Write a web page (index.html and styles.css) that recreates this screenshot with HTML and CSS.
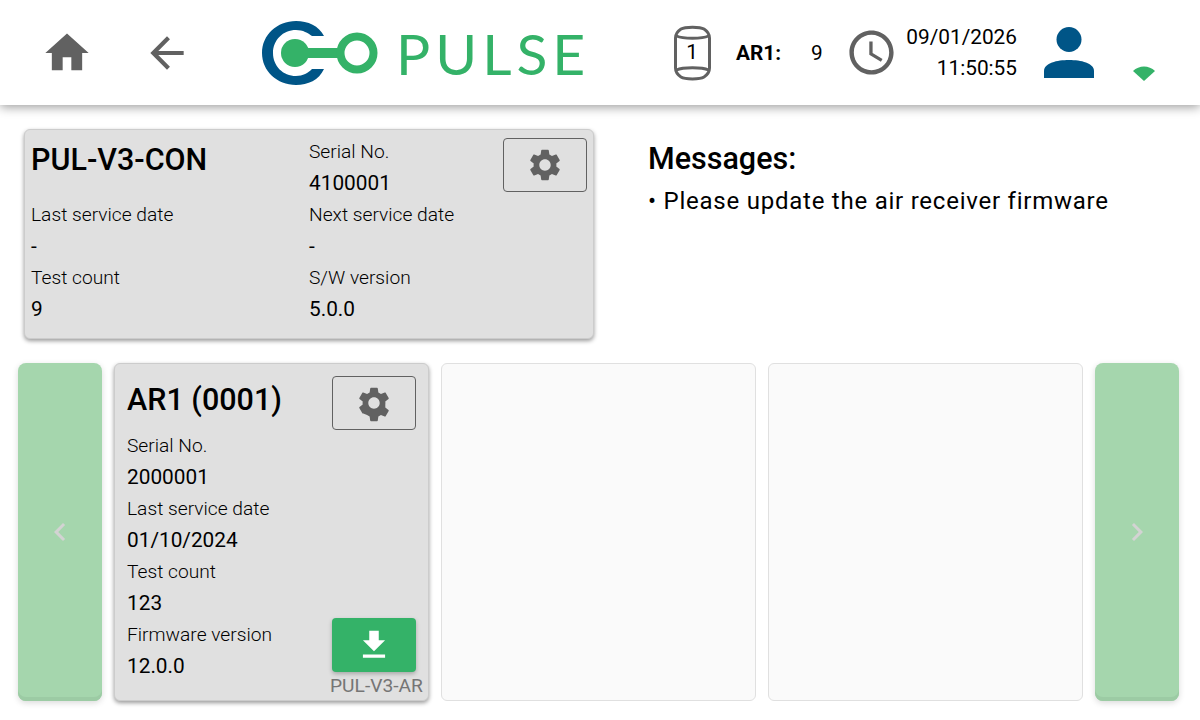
FILE: index.html
```html
<!DOCTYPE html>
<html lang="en">
<head>
    <meta charset="UTF-8">
    <title>Pulse</title>
    <link rel="stylesheet" href="styles.css">
</head>
<body>
    <header class="topbar">
        <svg class="icon-home" viewBox="0 0 24 24"><path d="M10 20v-6h4v6h5v-8h3L12 3 2 12h3v8z"/></svg>
        <svg class="icon-back" viewBox="0 0 24 24"><path d="M20 11H7.83l5.59-5.59L12 4l-8 8 8 8 1.41-1.41L7.83 13H20v-2z"/></svg>
        <svg class="logo-mark" viewBox="0 0 118 66">
            <path class="logo-c" d="M63 16C58 6 47 1 35 1 16 1 1 15 1 33s15 32 34 32c12 0 23-5 28-16H51c-4 4-9 7-16 7-13 0-23-10-23-23s10-23 23-23c7 0 12 3 16 6z"/>
            <circle class="logo-g" cx="34" cy="33" r="14"/>
            <rect class="logo-g" x="40" y="28" width="40" height="10"/>
            <circle class="logo-ring" cx="96" cy="33" r="16.5"/>
        </svg>
        <div class="logo-text">PULSE</div>
        <div class="can">
            <svg viewBox="0 0 38 56"><path d="M8 4C12 1.500 27 1.500 31 4c3 2 5.500 4 5.500 9v30c0 5-2.500 7-5.500 9-4 2.500-19 2.500-23 0-3-2-5.500-4-5.500-9V13C2.500 8 5 6 8 4zM3.500 11c6.500 3 25.500 3 32 0M3.500 45c6.500-3 25.500-3 32 0"/></svg>
            <span>1</span>
        </div>
        <div class="ar-name">AR1:</div>
        <div class="ar-count">9</div>
        <svg class="icon-clock" viewBox="0 0 24 24"><path d="M11.99 2C6.47 2 2 6.48 2 12s4.47 10 9.99 10C17.52 22 22 17.52 22 12S17.52 2 11.99 2zM12 20c-4.42 0-8-3.58-8-8s3.58-8 8-8 8 3.58 8 8-3.58 8-8 8zm.5-13H11v6l5.25 3.15.75-1.23-4.5-2.67z"/></svg>
        <div class="datetime">
            <div>09/01/2026</div>
            <div>11:50:55</div>
        </div>
        <svg class="icon-user" viewBox="0 0 52 52"><circle cx="26" cy="12.500" r="12.500"/><path d="M1 51V44C1 36 14 33 26 33s25 3 25 11v7z"/></svg>
        <svg class="icon-wifi" viewBox="0 0 24 16"><path d="M1 6c6-6 16-6 22 0L12 16z"/></svg>
    </header>

    <section class="upper">
        <div class="card con-card">
            <div class="con-title">PUL-V3-CON</div>
            <div class="con-col">
                <div class="label">Serial No.</div>
                <div class="value">4100001</div>
            </div>
            <div class="con-col">
                <div class="label">Last service date</div>
                <div class="value">-</div>
            </div>
            <div class="con-col">
                <div class="label">Next service date</div>
                <div class="value">-</div>
            </div>
            <div class="con-col">
                <div class="label">Test count</div>
                <div class="value">9</div>
            </div>
            <div class="con-col">
                <div class="label">S/W version</div>
                <div class="value">5.0.0</div>
            </div>
            <button class="gear-btn con-gear">
                <svg viewBox="0 0 24 24"><path d="M19.14 12.94c.04-.3.06-.61.06-.94 0-.32-.02-.64-.07-.94l2.03-1.58c.18-.14.23-.41.12-.61l-1.92-3.32c-.12-.22-.37-.29-.59-.22l-2.39.96c-.5-.38-1.03-.7-1.62-.94l-.36-2.54c-.04-.24-.24-.41-.48-.41h-3.84c-.24 0-.43.17-.47.41l-.36 2.54c-.59.24-1.13.57-1.62.94l-2.39-.96c-.22-.08-.47 0-.59.22L2.74 8.87c-.12.21-.08.47.12.61l2.03 1.58c-.05.3-.09.63-.09.94s.02.64.07.94l-2.03 1.58c-.18.14-.23.41-.12.61l1.92 3.32c.12.22.37.29.59.22l2.39-.96c.5.38 1.03.7 1.62.94l.36 2.54c.05.24.24.41.48.41h3.84c.24 0 .44-.17.47-.41l.36-2.54c.59-.24 1.13-.56 1.62-.94l2.39.96c.22.08.47 0 .59-.22l1.92-3.32c.12-.22.07-.47-.12-.61l-2.01-1.58zM12 15.6c-1.98 0-3.6-1.62-3.6-3.6s1.62-3.6 3.6-3.6 3.6 1.62 3.6 3.6-1.62 3.6-3.6 3.6z"/></svg>
            </button>
        </div>
        <div class="messages">
            <div class="messages-title">Messages:</div>
            <div class="messages-line">• Please update the air receiver firmware</div>
        </div>
    </section>

    <section class="receivers">
        <button class="nav-btn">
            <svg viewBox="0 0 24 24"><path d="M15.41 7.41 14 6l-6 6 6 6 1.41-1.41L10.830 12z"/></svg>
        </button>
        <div class="card ar-card">
            <div class="ar-head">
                <div class="ar-title">AR1 (0001)</div>
                <button class="gear-btn">
                    <svg viewBox="0 0 24 24"><path d="M19.14 12.94c.04-.3.06-.61.06-.94 0-.32-.02-.64-.07-.94l2.03-1.58c.18-.14.23-.41.12-.61l-1.92-3.32c-.12-.22-.37-.29-.59-.22l-2.39.96c-.5-.38-1.03-.7-1.62-.94l-.36-2.54c-.04-.24-.24-.41-.48-.41h-3.84c-.24 0-.43.17-.47.41l-.36 2.54c-.59.24-1.13.57-1.62.94l-2.39-.96c-.22-.08-.47 0-.59.22L2.74 8.87c-.12.21-.08.47.12.61l2.03 1.58c-.05.3-.09.63-.09.94s.02.64.07.94l-2.03 1.58c-.18.14-.23.41-.12.61l1.92 3.32c.12.22.37.29.59.22l2.39.96c.5.38 1.03.7 1.62.94l.36 2.54c.05.24.24.41.48.41h3.84c.24 0 .44-.17.47-.41l.36-2.54c.59-.24 1.13-.56 1.62-.94l2.39.96c.22.08.47 0 .59-.22l1.92-3.32c.12-.22.07-.47-.12-.61l-2.01-1.58zM12 15.6c-1.98 0-3.6-1.62-3.6-3.6s1.62-3.6 3.6-3.6 3.6 1.62 3.6 3.6-1.62 3.6-3.6 3.6z"/></svg>
                </button>
            </div>
            <div class="ar-foot">
                <div class="ar-fields">
                    <div class="label">Serial No.</div>
                    <div class="value">2000001</div>
                    <div class="label">Last service date</div>
                    <div class="value">01/10/2024</div>
                    <div class="label">Test count</div>
                    <div class="value">123</div>
                    <div class="label">Firmware version</div>
                    <div class="value">12.0.0</div>
                </div>
                <div class="update">
                    <button class="download-btn">
                        <svg viewBox="0 0 24 24"><path d="M19 9h-4V3H9v6H5l7 7 7-7zM5 18v2h14v-2H5z"/></svg>
                    </button>
                    <div class="model">PUL-V3-AR</div>
                </div>
            </div>
        </div>
        <div class="empty-card"></div>
        <div class="empty-card"></div>
        <button class="nav-btn">
            <svg viewBox="0 0 24 24"><path d="M10 6 8.590 7.410 13.170 12l-4.580 4.590L10 18l6-6z"/></svg>
        </button>
    </section>
</body>
</html>
```

FILE: styles.css
```css
* {
    box-sizing: border-box;
}
body {
    margin: 0;
    height: 720px;
    overflow: hidden;
    background: white;
    font-family: Roboto, Arial, sans-serif;
    color: #000;
}

/* top bar */
.topbar {
    height: 105px;
    display: flex;
    align-items: center;
    background: white;
    box-shadow: 0 2px 10px rgba(0,0,0,0.4);
}
.topbar svg {
    flex: none;
    display: block;
}
.icon-home {
    width: 52px;
    height: 52px;
    margin-left: 41px;
    fill: #616161;
}
.icon-back {
    width: 50px;
    height: 50px;
    margin-left: 49px;
    fill: #616161;
}
.logo-mark {
    width: 118px;
    height: 66px;
    margin-left: 69px;
}
.logo-c {
    fill: #005587;
}
.logo-g {
    fill: #34b268;
}
.logo-ring {
    fill: none;
    stroke: #34b268;
    stroke-width: 8px;
}
.logo-text {
    width: 270px;
    margin-left: 17px;
    font-family: Lato, sans-serif;
    font-size: 57px;
    line-height: 66px;
    letter-spacing: 5px;
    color: #34b268;
}
.can {
    position: relative;
    width: 38px;
    height: 56px;
    margin-left: 7px;
}
.can svg {
    width: 38px;
    height: 56px;
    fill: none;
    stroke: #616161;
    stroke-width: 3px;
}
.can span {
    position: absolute;
    left: 0;
    right: 0;
    top: 15px;
    text-align: center;
    font-size: 20.8px;
    line-height: 24px;
}
.ar-name {
    width: 75px;
    margin-left: 25px;
    font-size: 20.8px;
    font-weight: 700;
}
.ar-count {
    width: 34px;
    font-size: 20.8px;
}
.icon-clock {
    width: 53px;
    height: 53px;
    fill: #616161;
}
.datetime {
    width: 119px;
    text-align: right;
    font-size: 20.8px;
    line-height: 31px;
}
.icon-user {
    width: 52px;
    height: 52px;
    margin-left: 26px;
    fill: #005587;
}
.icon-wifi {
    width: 24px;
    height: 16px;
    margin-left: 37px;
    margin-top: 40px;
    fill: #34b268;
}

/* controller card + messages */
.upper {
    display: flex;
    padding: 24px 0 0 24px;
}
.card {
    background: #e0e0e0;
    border: 1px solid #ccc;
    border-radius: 6px;
    box-shadow: 0 2px 4px rgba(0,0,0,0.4);
}
.con-card {
    position: relative;
    width: 570px;
    height: 210px;
    padding: 6px 6px 0;
    display: grid;
    grid-template-columns: 278px 1fr;
    align-content: start;
}
.con-title {
    font-size: 30.5px;
    font-weight: 500;
    line-height: 48px;
}
.con-col {
    min-width: 0;
}
.label {
    font-size: 19.2px;
    font-weight: 300;
    line-height: 31.5px;
}
.value {
    font-size: 20.8px;
    line-height: 31.5px;
}
.gear-btn {
    flex: none;
    width: 84px;
    height: 54px;
    padding: 0;
    display: flex;
    align-items: center;
    justify-content: center;
    background: transparent;
    border: 1px solid #616161;
    border-radius: 4px;
}
.gear-btn svg {
    width: 38px;
    height: 38px;
    fill: #616161;
}
.con-gear {
    position: absolute;
    top: 8px;
    right: 6px;
}
.messages {
    margin-left: 54px;
    padding-top: 12px;
}
.messages-title {
    font-size: 30.5px;
    font-weight: 500;
    line-height: 36px;
}
.messages-line {
    margin-top: 8px;
    font-size: 24px;
    line-height: 32px;
    letter-spacing: 0.76px;
}

/* receiver row */
.receivers {
    display: flex;
    gap: 12px;
    height: 338px;
    margin-top: 24px;
    padding-left: 18px;
}
.nav-btn {
    width: 84px;
    padding: 0;
    display: flex;
    align-items: center;
    justify-content: center;
    background: #a5d6ad;
    border: none;
    border-radius: 8px;
    box-shadow: inset 0 -4px 0 #9ccba4, 0 2px 6px rgba(0,0,0,0.15);
}
.nav-btn svg {
    width: 36px;
    height: 36px;
    fill: #d3d3d3;
}
.ar-card {
    width: 315px;
    padding: 12px 12px 0;
    display: flex;
    flex-direction: column;
}
.ar-head {
    display: flex;
    justify-content: space-between;
    height: 54px;
}
.ar-title {
    font-size: 30.5px;
    font-weight: 500;
    line-height: 48px;
}
.ar-foot {
    display: flex;
    justify-content: space-between;
}
.ar-fields .label {
    line-height: 32px;
}
.ar-fields .value {
    line-height: 31px;
}
.update {
    width: 92px;
    margin-right: -6px;
    padding-top: 188px;
    text-align: center;
}
.download-btn {
    width: 84px;
    height: 54px;
    margin-left: 2px;
    padding: 0;
    display: flex;
    align-items: center;
    justify-content: center;
    background: #34b268;
    border: none;
    border-radius: 4px;
    box-shadow: 0 2px 4px rgba(0,0,0,0.25);
}
.download-btn svg {
    width: 38px;
    height: 38px;
    fill: white;
}
.model {
    font-size: 19.2px;
    line-height: 28px;
    color: #757575;
    white-space: nowrap;
}
.empty-card {
    width: 315px;
    background: #fafafa;
    border: 1px solid #e0e0e0;
    border-radius: 6px;
}
```
